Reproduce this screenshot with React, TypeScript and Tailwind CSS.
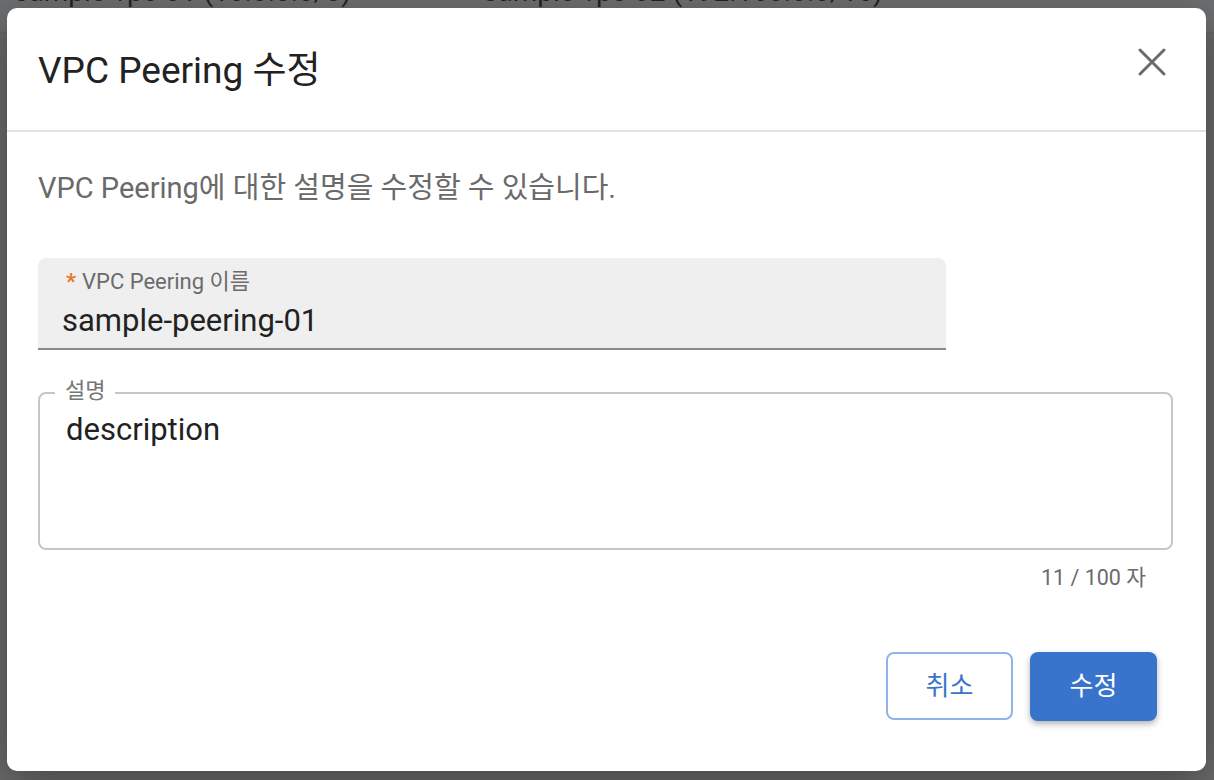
const font = { fontFamily: 'Roboto, "Noto Sans CJK KR", sans-serif' }

const CloseIcon = () => (
  <svg width="32" height="32" viewBox="0 0 32 32" fill="none">
    <path d="M4 4 L28 28 M28 4 L4 28" stroke="#6b6b6b" strokeWidth="3" strokeLinecap="round" />
  </svg>
)

export default function App() {
  return (
    <div className="relative w-[1214px] h-[780px] overflow-hidden bg-[#6a6a6a]" style={font}>
      {/* page behind the dim overlay */}
      <div className="h-[58px] bg-[#6e6f71] border-b border-[#646567]">
        <div className="flex -mt-[25px] text-[28px] leading-[34px] text-[#232323]">
          <span className="pl-[14px] w-[483px]">sample-vpc-01 (10.0.0.0/8)</span>
          <span>sample-vpc-02 (192.168.0.0/16)</span>
        </div>
      </div>

      {/* dialog */}
      <div className="absolute left-[7px] top-[8px] w-[1199px] h-[763px] bg-white rounded-[10px] shadow-[0_10px_40px_rgba(0,0,0,0.35)] flex flex-col">
        <div className="h-[124px] flex items-center justify-between pl-[31px] pr-[38px] border-b-2 border-[#e2e2e2]">
          <h1 className="text-[37px] leading-[44px] text-[#222] font-normal mt-[3px]">VPC Peering 수정</h1>
          <button className="w-[32px] h-[32px] -mt-[14px]">
            <CloseIcon />
          </button>
        </div>

        <div className="flex-1 flex flex-col pl-[31px] pr-[33px] pt-[38px]">
          <p className="text-[29px] leading-[36px] text-[#6a6a6a]">
            VPC Peering에 대한 설명을 수정할 수 있습니다.
          </p>

          {/* name (filled, read-only) */}
          <div className="mt-[52px] w-[908px] h-[92px] bg-[#efefef] rounded-t-[8px] border-b-2 border-[#8a8a8a] px-[24px] pt-[11px]">
            <div className="ml-[4px] text-[22px] leading-[26px] text-[#6b6b6b] flex items-center gap-[6px]">
              <span className="text-[#e8772e] font-bold">*</span>
              <span>VPC Peering 이름</span>
            </div>
            <div className="mt-[8px] text-[31px] leading-[36px] text-[#222]">sample-peering-01</div>
          </div>

          {/* description (outlined) */}
          <div className="relative mt-[42px] h-[158px] border-2 border-[#c6c6c6] rounded-[8px] px-[26px] pt-[18px]">
            <span className="absolute -top-[16px] left-[15px] bg-white px-[10px] text-[22px] leading-[26px] text-[#777]">
              설명
            </span>
            <div className="text-[31px] leading-[36px] text-[#222]">description</div>
          </div>
          <div className="mt-[16px] pr-[27px] text-right text-[21.5px] leading-[24px] text-[#6b6b6b]">11 / 100 자</div>

          <div className="mt-[62px] flex justify-end gap-[17px] pr-[16px]">
            <button className="w-[127px] h-[68px] rounded-[8px] border-2 border-[#91b4e6] bg-white text-[26px] text-[#3a74cc]">
              취소
            </button>
            <button className="w-[127px] h-[69px] rounded-[8px] bg-[#3874cb] text-[26px] text-white shadow-[0_3px_6px_rgba(0,0,0,0.3)]">
              수정
            </button>
          </div>
        </div>
      </div>
    </div>
  )
}
